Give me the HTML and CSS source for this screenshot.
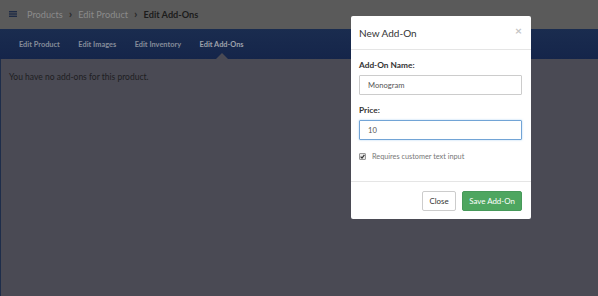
FILE: index.html
```html
<!DOCTYPE html>
<html>
<head>
<meta charset="utf-8">
<link rel="stylesheet" href="styles.css">
</head>
<body>
<div class="page">
  <header class="topbar">
    <svg class="burger" width="8" height="6" viewBox="0 0 8 6"><rect x="0" y="0" width="8" height="1.4" fill="#1d2a45"/><rect x="0" y="2.3" width="8" height="1.4" fill="#1d2a45"/><rect x="0" y="4.6" width="8" height="1.4" fill="#1d2a45"/></svg>
    <nav class="crumbs">
      <span class="crumb">Products</span>
      <span class="sep">&#x203A;</span>
      <span class="crumb">Edit Product</span>
      <span class="sep">&#x203A;</span>
      <span class="crumb current">Edit Add-Ons</span>
    </nav>
  </header>
  <div class="tabs">
    <span class="tab">Edit Product</span>
    <span class="tab">Edit Images</span>
    <span class="tab">Edit Inventory</span>
    <span class="tab active">Edit Add-Ons</span>
  </div>
  <main class="content">
    <p class="empty">You have no add-ons for this product.</p>
  </main>
</div>

<div class="modal">
  <div class="modal-header">
    <h4 class="modal-title">New Add-On</h4>
    <span class="close">&times;</span>
  </div>
  <div class="modal-body">
    <label class="field-label">Add-On Name:</label>
    <div class="input">Monogram</div>
    <label class="field-label">Price:</label>
    <div class="input focus">10</div>
    <div class="check-row">
      <span class="checkbox"><svg width="5" height="5" viewBox="0 0 5 5"><path d="M0.6 2.6 L2 4 L4.4 0.8" stroke="#333" stroke-width="1.2" fill="none"/></svg></span>
      <span class="check-label">Requires customer text input</span>
    </div>
  </div>
  <div class="modal-footer">
    <span class="btn btn-default">Close</span>
    <span class="btn btn-success">Save Add-On</span>
  </div>
</div>
</body>
</html>
```

FILE: styles.css
```css
* { box-sizing: border-box; }
html, body { margin: 0; padding: 0; }
body {
  width: 598px;
  height: 296px;
  overflow: hidden;
  font-family: "Lato", "Open Sans", sans-serif;
  background: #4a4a54;
  position: relative;
}
.page {
  display: flex;
  flex-direction: column;
  height: 296px;
}
.topbar {
  height: 29px;
  background: #5a5a5a;
  display: flex;
  align-items: center;
  padding-left: 9px;
}
.burger { display: block; margin-top: -1px; }
.crumbs {
  display: flex;
  align-items: center;
  margin-left: 10px;
  font-size: 9.2px;
  color: #8b8b8b;
}
.sep { margin: -2px 6px 0; font-size: 12px; color: #2a2a2a; font-weight: 700; line-height: 1; }
.crumb.current { color: #1c1c1c; font-weight: 700; }
.tabs {
  height: 30px;
  background: linear-gradient(#1a2c4f, #15254a);
  display: flex;
  align-items: stretch;
  padding-left: 19px;
  gap: 18.5px;
  font-size: 7.4px;
  font-weight: 700;
  color: #858c9a;
}
.tab {
  position: relative;
  display: flex;
  align-items: center;
}
.tab.active { color: #9ca1ab; }
.tab.active::after {
  content: "";
  position: absolute;
  left: 50%;
  margin-left: -6px;
  bottom: 0;
  border-left: 6px solid transparent;
  border-right: 6px solid transparent;
  border-bottom: 6px solid #4a4a54;
}
.content {
  flex: 1;
  border-left: 1px solid #1e2d4a;
  padding: 12px 8px;
}
.empty {
  margin: 0;
  font-size: 8.5px;
  line-height: 12px;
  color: #1e1e22;
}
.modal {
  position: absolute;
  left: 351px;
  top: 16px;
  width: 180px;
  height: 203px;
  background: #fff;
  border-radius: 2px;
  display: flex;
  flex-direction: column;
}
.modal-header {
  height: 34px;
  border-bottom: 1px solid #e5e5e5;
  display: flex;
  align-items: center;
  justify-content: space-between;
  padding: 0 9px 0 8px;
}
.modal-title {
  margin: 0;
  font-size: 10px;
  font-weight: 400;
  color: #333;
}
.close {
  font-size: 12px;
  color: #c4c4c4;
  margin-top: -5px;
  font-weight: 700;
}
.modal-body {
  padding: 9px 9px 0 8px;
  flex: 1;
  display: flex;
  flex-direction: column;
}
.field-label {
  font-size: 8.3px;
  font-weight: 700;
  color: #333;
  line-height: 12px;
}
.input {
  margin-top: 4px;
  margin-bottom: 9px;
  height: 20px;
  border: 1px solid #ccc;
  border-radius: 1px;
  padding-left: 8px;
  display: flex;
  align-items: center;
  font-size: 7.6px;
  color: #555;
}
.input.focus {
  border-color: #72a4d6;
  box-shadow: 0 0 2px rgba(102,175,233,.6);
  margin-bottom: 8px;
}
.check-row {
  display: flex;
  align-items: center;
  gap: 6px;
  height: 16px;
}
.checkbox {
  width: 7px;
  height: 7px;
  border: 1px solid #999;
  border-radius: 1px;
  background: #e8e8e8;
  display: flex;
  align-items: center;
  justify-content: center;
}
.checkbox svg { display: block; }
.check-label {
  font-size: 7.3px;
  color: #777;
}
.modal-footer {
  height: 38px;
  border-top: 1px solid #e5e5e5;
  display: flex;
  align-items: center;
  justify-content: flex-end;
  gap: 6px;
  padding-right: 9px;
}
.btn {
  height: 20px;
  display: flex;
  align-items: center;
  justify-content: center;
  font-size: 7.9px;
  border-radius: 2px;
  border: 1px solid #ccc;
}
.btn-default { width: 34px; color: #333; background: #fff; }
.btn-success { width: 60px; color: #fff; background: #4ea660; border-color: #47995a; }
```
